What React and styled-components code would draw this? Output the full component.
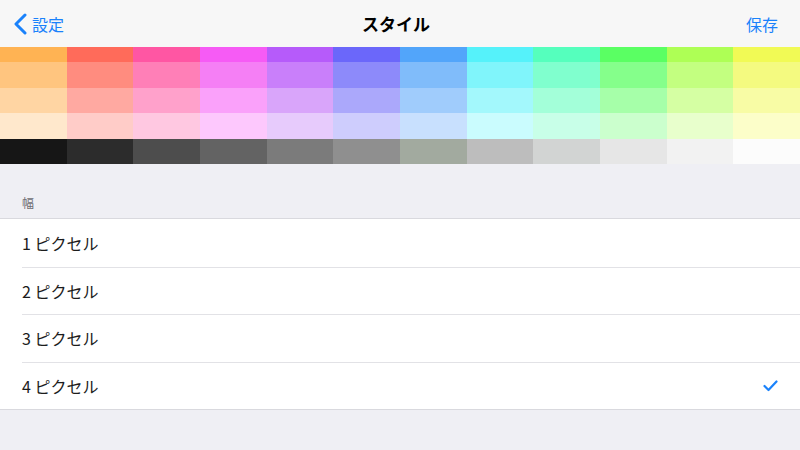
import React from "react";
import styled, { createGlobalStyle } from "styled-components";

const palette = [
  ["#FFB353", "#FF6B5A", "#FF56A3", "#F65BF5", "#B65BFA", "#6B67FA", "#52A5FA", "#55F2FA", "#55FFBD", "#5AFF63", "#AEFF55", "#F1FA55"],
  ["#FFC57F", "#FF8C7F", "#FF7FB7", "#F57FF5", "#C97FFA", "#8D8AFA", "#80BCFA", "#80F5FB", "#80FFCE", "#85FF8B", "#C3FF80", "#F4FA80"],
  ["#FFD5A3", "#FFA9A1", "#FFA1CB", "#FAA1FA", "#D9A5FA", "#ABA8FB", "#A0CCFC", "#A3F8FC", "#A3FFD9", "#A6FFA9", "#D5FFA3", "#F8FCA5"],
  ["#FFE8CC", "#FFCCC8", "#FFC8E1", "#FDC8FD", "#E7CBFC", "#CECDFD", "#C8E0FE", "#CAFCFE", "#C8FFE8", "#CBFFCD", "#E8FFCC", "#FCFEC9"],
  ["#161616", "#2C2C2C", "#4D4D4D", "#636363", "#7B7B7B", "#8F8F8F", "#A2AA9F", "#BDBDBD", "#D2D4D3", "#E6E6E6", "#F2F2F2", "#FCFCFC"],
];

const widths = [1, 2, 3, 4];

const GlobalStyle = createGlobalStyle`
  html, body {
    margin: 0;
    padding: 0;
    background: #EFEFF4;
    font-family: "Noto Sans CJK JP", "Noto Sans", sans-serif;
  }
`;

const Screen = styled.div`
  width: 800px;
  height: 450px;
  overflow: hidden;
  background: #EFEFF4;
  display: flex;
  flex-direction: column;
`;

const NavBar = styled.header`
  height: 47px;
  flex: none;
  background: #F7F7F7;
  display: grid;
  grid-template-columns: 1fr auto 1fr;
  align-items: center;
  padding: 0 22px 0 14px;
`;

const NavButton = styled.button`
  border: none;
  background: none;
  padding: 0;
  display: flex;
  align-items: center;
  gap: 5px;
  color: #1A82FB;
  font-family: inherit;
  font-size: 16px;
  justify-self: ${(p) => (p.$end ? "end" : "start")};
  cursor: pointer;
`;

const Title = styled.h1`
  margin: 0;
  font-size: 17px;
  font-weight: 700;
  color: #000;
`;

const Palette = styled.div`
  flex: none;
  display: grid;
  grid-template-columns: repeat(12, 1fr);
  grid-template-rows: 15px repeat(4, 25.5px);
`;

const Swatch = styled.div`
  background: ${(p) => p.$color};
`;

const SectionHeader = styled.div`
  height: 54px;
  flex: none;
  box-sizing: border-box;
  display: flex;
  align-items: flex-end;
  padding: 0 22px 7px;
  font-size: 12px;
  color: #6D6D72;
`;

const List = styled.ul`
  list-style: none;
  margin: 0;
  padding: 0;
  background: #fff;
  border-top: 1px solid #D9D9DE;
  border-bottom: 1px solid #D9D9DE;
`;

const Row = styled.li`
  height: 47.5px;
  padding-left: 22px;
  display: flex;
  align-items: stretch;
  & + & > div {
    border-top: 1px solid #E2E2E6;
  }
`;

const RowInner = styled.div`
  flex: 1;
  display: flex;
  align-items: center;
  justify-content: space-between;
  padding-right: 22px;
  font-size: 16px;
  color: #1C1C1C;
`;

const Check = () => (
  <svg width="15" height="12" viewBox="0 0 15 12">
    <polyline
      points="1.5,6 5.5,10 13.5,1.5"
      fill="none"
      stroke="#1A82FB"
      strokeWidth="2.2"
      strokeLinecap="round"
      strokeLinejoin="round"
    />
  </svg>
);

const Chevron = () => (
  <svg width="13" height="22" viewBox="0 0 13 22">
    <polyline
      points="11,2 2,11 11,20"
      fill="none"
      stroke="#1A82FB"
      strokeWidth="3"
      strokeLinecap="round"
      strokeLinejoin="round"
    />
  </svg>
);

export default function App() {
  const [selected, setSelected] = React.useState(4);
  return (
    <Screen>
      <GlobalStyle />
      <NavBar>
        <NavButton>
          <Chevron />
          設定
        </NavButton>
        <Title>スタイル</Title>
        <NavButton $end>保存</NavButton>
      </NavBar>
      <Palette>
        {palette.map((row, r) =>
          row.map((c, i) => <Swatch key={`${r}-${i}`} $color={c} />)
        )}
      </Palette>
      <SectionHeader>幅</SectionHeader>
      <List>
        {widths.map((w) => (
          <Row key={w} onClick={() => setSelected(w)}>
            <RowInner>
              <span>{w} ピクセル</span>
              {selected === w && <Check />}
            </RowInner>
          </Row>
        ))}
      </List>
    </Screen>
  );
}
